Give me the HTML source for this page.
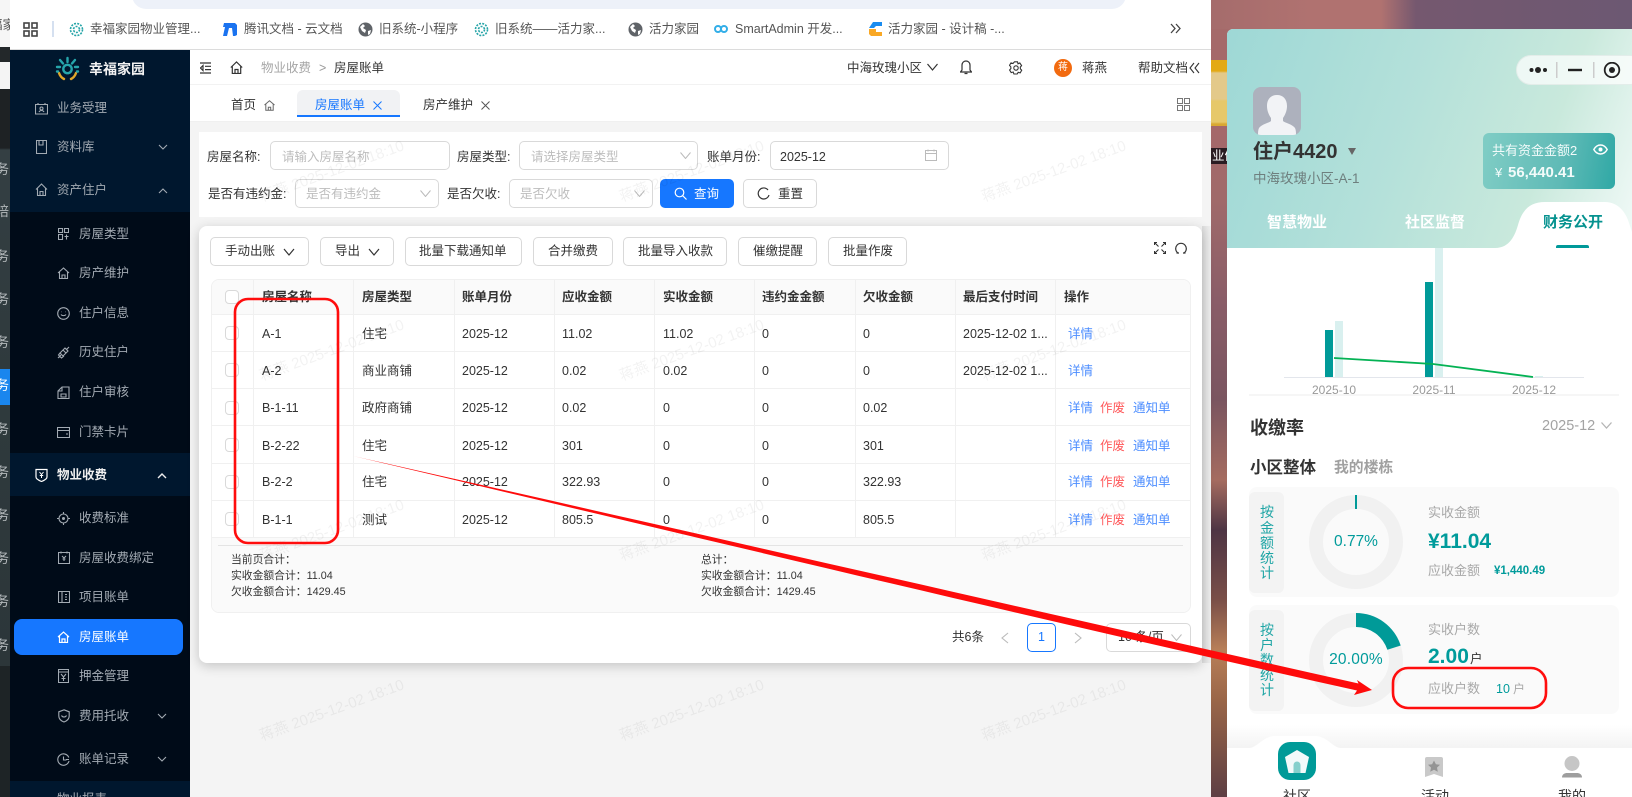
<!DOCTYPE html>
<html lang="zh">
<head>
<meta charset="utf-8">
<title>房屋账单</title>
<style>
html,body{margin:0;padding:0;width:1632px;height:797px;overflow:hidden;background:#fff}
body{position:relative;font-family:"Liberation Sans","Noto Sans CJK SC",sans-serif;font-size:12.5px;color:#333}
div,span,svg{position:absolute;box-sizing:border-box}
.t{white-space:nowrap;line-height:20px;height:20px}
.sb{color:#a3abb3}
.ph{color:#bdbdbd}
.inp{border:1px solid #d9d9d9;border-radius:5px;background:#fff;height:29px}
.btn{border:1px solid #d9d9d9;border-radius:5px;background:#fff;height:29px;top:237px}
.gl{background:#f0f0f0}
.cb{width:14px;height:14px;left:225px;border:1px solid #d9d9d9;border-radius:4px;background:#fff}
.l{color:#4c8dff}.r{color:#ff5a5c}
.b{font-weight:700}
.wm{font-size:15px;color:rgba(0,0,0,.05);white-space:nowrap;transform:translate(-50%,-50%) rotate(-20deg);line-height:20px}
.ic{fill:none;stroke:#a3abb3;stroke-width:1.1}
.bm{color:#555;font-size:12.5px}
.teal{color:#009b9b}
.gr{color:#a8a8a8;font-size:13px}
.vt{left:1249px;width:36px;text-align:center;color:#1fa5a5;font-size:14px;line-height:15px;height:15px}
.card{left:1249px;width:370px;background:#fafafa;border-radius:8px}
.tag{left:1249px;width:35px;background:#f3f3f3;border-radius:6px}
.st{left:-18px;font-size:13.5px;color:#b5babc;letter-spacing:0}
.sm{font-size:10.8px;line-height:16px;height:16px}
</style>
</head>
<body>

<!-- wallpaper -->
<div style="left:1211px;top:0;width:421px;height:797px;background:linear-gradient(180deg,#a56a6a 0,#a5686a 130px,#a06a6a 200px,#8a5d68 300px,#7a5560 400px,#a56c60 480px,#4e3544 530px,#7a4f48 600px,#b87f58 650px,#9a6648 700px,#5e3f44 797px)"></div>
<div style="left:1211px;top:0;width:421px;height:29px;background:linear-gradient(90deg,#a56c6c 0,#b07270 100px,#b07270 170px,#75586f 205px,#6c5872 421px)"></div>
<div style="left:1211px;top:60px;width:16px;height:66px;background:linear-gradient(180deg,#e3a915 0,#e3a915 11px,#e3c98a 13px,#e3c98a 39px,#e6c86a 41px,#e6c86a 62px,#d9a832 64px)"></div>
<div style="left:1211px;top:148px;width:16px;height:16px;background:#2a1c22"></div>
<span class="t" style="left:1212px;top:146px;width:15px;overflow:hidden;color:#fff;font-size:12.5px">业们</span>

<!-- left strip -->
<div style="left:0;top:0;width:10px;height:797px;overflow:hidden;background:linear-gradient(180deg,#f6f6f6 0,#f6f6f6 47px,#23282a 47px,#23282a 62px,#f4f4f4 62px,#f4f4f4 89px,#1e2224 89px,#1e2224 148px,#343f43 150px,#2f3a3d 369px,#1a86ee 369px,#1a86ee 405px,#2f3a3d 405px,#2c3639 666px,#1e2426 666px,#1e2426 797px)">
<span class="t" style="left:-10px;top:15px;color:#555">福家</span>
<span class="t st" style="top:160px">计务</span>
<span class="t st" style="top:202px">计培</span>
<span class="t st" style="top:247px">计务</span>
<span class="t st" style="top:290px">计务</span>
<span class="t st" style="top:333px">计务</span>
<span class="t st" style="top:376px;color:#fff">计务</span>
<span class="t st" style="top:420px">计务</span>
<span class="t st" style="top:463px">计务</span>
<span class="t st" style="top:506px">计务</span>
<span class="t st" style="top:549px">计务</span>
<span class="t st" style="top:592px">计务</span>
<span class="t st" style="top:636px">计务</span>
</div>

<!-- browser chrome -->
<div style="left:10px;top:0;width:1201px;height:50px;background:#fff;border-bottom:1px solid #dcdcdc"></div>
<div style="left:132px;top:-20px;width:994px;height:29px;background:#edf1f9;border-radius:14px"></div>
<svg style="left:23px;top:22px" width="15" height="15" viewBox="0 0 15 15"><g fill="none" stroke="#444" stroke-width="1.6"><rect x="1" y="1" width="5" height="5"/><rect x="9" y="1" width="5" height="5"/><rect x="1" y="9" width="5" height="5"/><rect x="9" y="9" width="5" height="5"/></g></svg>
<div style="left:52px;top:21px;width:2px;height:16px;background:#d5e0f0"></div>
<svg style="left:69px;top:22px" width="15" height="15" viewBox="0 0 15 15"><g fill="none" stroke="#27a5a8" stroke-width="1.6" stroke-dasharray="2 1.2"><circle cx="7.5" cy="7.5" r="6"/><circle cx="7.5" cy="7.5" r="3"/></g></svg>
<span class="t bm" style="left:90px;top:19px">幸福家园物业管理...</span>
<svg style="left:222px;top:22px" width="15" height="15" viewBox="0 0 15 15"><path d="M2 1h11l2 2v10l-2 1h-2l-1-8H7L5 14H1L3 5H1z" fill="#1a73f0"/></svg>
<span class="t bm" style="left:244px;top:19px">腾讯文档 - 云文档</span>
<svg style="left:358px;top:22px" width="15" height="15" viewBox="0 0 15 15"><circle cx="7.5" cy="7.5" r="7" fill="#5f6368"/><path d="M2 5l3-3 2 2-2 2 3 2-1 3-3-2zM10 9l3-1-1 4-2 1z" fill="#fff"/></svg>
<span class="t bm" style="left:379px;top:19px">旧系统-小程序</span>
<svg style="left:474px;top:22px" width="15" height="15" viewBox="0 0 15 15"><g fill="none" stroke="#27a5a8" stroke-width="1.6" stroke-dasharray="2 1.2"><circle cx="7.5" cy="7.5" r="6"/><circle cx="7.5" cy="7.5" r="3"/></g></svg>
<span class="t bm" style="left:495px;top:19px">旧系统——活力家...</span>
<svg style="left:628px;top:22px" width="15" height="15" viewBox="0 0 15 15"><circle cx="7.5" cy="7.5" r="7" fill="#5f6368"/><path d="M2 5l3-3 2 2-2 2 3 2-1 3-3-2zM10 9l3-1-1 4-2 1z" fill="#fff"/></svg>
<span class="t bm" style="left:649px;top:19px">活力家园</span>
<svg style="left:714px;top:23px" width="14" height="12" viewBox="0 0 14 12"><g fill="none" stroke="#32aee8" stroke-width="2"><circle cx="4" cy="6" r="3"/><circle cx="10" cy="6" r="3"/></g></svg>
<span class="t bm" style="left:735px;top:19px">SmartAdmin 开发...</span>
<svg style="left:869px;top:22px" width="13" height="14" viewBox="0 0 13 14"><path d="M4 0h9v4H7L5 6H0z" fill="#1a8cf0"/><path d="M0 7h7v3h6v4H2L0 12z" fill="#f9a825"/></svg>
<span class="t bm" style="left:888px;top:19px">活力家园 - 设计稿 -...</span>
<svg style="left:1170px;top:23px" width="11" height="11" viewBox="0 0 11 11"><path d="M1 1l4 4.5-4 4.5M6 1l4 4.5-4 4.5" fill="none" stroke="#444" stroke-width="1.3"/></svg>

<!-- main bg -->
<div style="left:190px;top:122px;width:1021px;height:675px;background:#f4f4f4;overflow:hidden">
 <div style="left:1012px;top:104px;width:9px;height:437px;background:linear-gradient(90deg,#dcdcdc,#efefef)"></div>
</div>

<!-- sidebar -->
<div style="left:10px;top:50px;width:180px;height:747px;background:#00172e"></div>
<div style="left:10px;top:212px;width:180px;height:241px;background:#000b18"></div>
<div style="left:10px;top:496px;width:180px;height:285px;background:#000b18"></div>
<svg style="left:55px;top:56px" width="25" height="26" viewBox="0 0 25 26"><g fill="none" stroke-width="2.4" stroke-linecap="round"><circle cx="12.5" cy="13" r="4.2" stroke="#26a6ab"/><path d="M12.5 2v4M5 4l3 3.5M20 4l-3 3.5M2 11h3M20 11h3" stroke="#26a6ab"/><path d="M4 17c1 3 3 5 5 6M21 17c-1 3-3 5-5 6" stroke="#e0a72a"/><path d="M2 15.500h1M22 15.500h1" stroke="#26a6ab"/></g></svg>
<span class="t b" style="left:89px;top:59px;color:#f2f2f2;font-size:14px">幸福家园</span>

<svg style="left:35px;top:102px" width="13" height="13" viewBox="0 0 13 13"><path class="ic" d="M.5 2.500h12v9.500H.5zM3 2.500V1M10 2.500V1M5 6.500a1.500 1.500 0 1 0 3 0a1.500 1.500 0 1 0-3 0M4 10c1-2 4-2 5 0"/></svg>
<span class="t sb" style="left:57px;top:98px">业务受理</span>
<svg style="left:36px;top:140px" width="11" height="14" viewBox="0 0 11 14"><path class="ic" d="M.5.500h10v13H.5zM7 .5v4.500H3V.5"/></svg>
<span class="t sb" style="left:57px;top:137px">资料库</span>
<svg style="left:158px;top:144px" width="10" height="6" viewBox="0 0 10 6"><path class="ic" stroke-width="1.4" d="M1 1l4 4 4-4"/></svg>
<svg style="left:35px;top:183px" width="13" height="13" viewBox="0 0 13 13"><path class="ic" d="M1 6.500L6.500 1 12 6.500M2.500 5.500V12.500h8V5.500M5 12.500V8.500h3v4"/></svg>
<span class="t sb" style="left:57px;top:180px">资产住户</span>
<svg style="left:158px;top:188px" width="10" height="6" viewBox="0 0 10 6"><path class="ic" stroke-width="1.4" d="M1 5l4-4 4 4"/></svg>

<svg style="left:58px;top:228px" width="11" height="12" viewBox="0 0 11 12"><path class="ic" d="M.5.500h4v4h-4zM6.500.500h4v4h-4zM.5 6.500h4v5h-4zM6.500 8.500h4M8.500 6.500v5"/></svg>
<span class="t sb" style="left:79px;top:224px">房屋类型</span>
<svg style="left:57px;top:267px" width="13" height="12" viewBox="0 0 13 12"><path class="ic" d="M1 6L6.500 1 12 6M2.500 5v6.500h8V5M5 11.500V8h3v3.500"/></svg>
<span class="t sb" style="left:79px;top:263px">房产维护</span>
<svg style="left:57px;top:307px" width="13" height="13" viewBox="0 0 13 13"><circle class="ic" cx="6.500" cy="6.500" r="5.800"/><path class="ic" d="M4 7.500c1 1.500 4 1.500 5 0M4.300 4.800h.4M8.300 4.800h.4"/></svg>
<span class="t sb" style="left:79px;top:303px">住户信息</span>
<svg style="left:57px;top:346px" width="13" height="13" viewBox="0 0 13 13"><path class="ic" d="M1 12l3-3M12 1L9 4M3 7l3-3 3 3-3 3zM6 4l2-2 3 3-2 2M7 10L4.500 12 1.500 9 3 7"/></svg>
<span class="t sb" style="left:79px;top:342px">历史住户</span>
<svg style="left:57px;top:386px" width="13" height="13" viewBox="0 0 13 13"><path class="ic" d="M1 5L5 1h7v11.500H1zM5 1v4H1M4 8h5v3H4z"/></svg>
<span class="t sb" style="left:79px;top:382px">住户审核</span>
<svg style="left:57px;top:427px" width="13" height="11" viewBox="0 0 13 11"><path class="ic" d="M.5.500h12v10H.5zM.5 3.500h12M9 7h2"/></svg>
<span class="t sb" style="left:79px;top:422px">门禁卡片</span>

<svg style="left:35px;top:468px" width="13" height="14" viewBox="0 0 13 14"><path d="M1 1.500h11V9c0 2-3 3.500-5.500 4.500C4 12.500 1 11 1 9z" fill="none" stroke="#fff" stroke-width="1.2"/><path d="M4.500 4l2 2.500 2-2.500M6.500 6.500V10M4.800 7.500h3.400" fill="none" stroke="#fff" stroke-width="1"/></svg>
<span class="t b" style="left:57px;top:465px;color:#f0f0f0">物业收费</span>
<svg style="left:157px;top:473px" width="10" height="6" viewBox="0 0 10 6"><path d="M1 5l4-4 4 4" fill="none" stroke="#eee" stroke-width="1.4"/></svg>

<svg style="left:57px;top:512px" width="13" height="13" viewBox="0 0 13 13"><circle class="ic" cx="6.500" cy="6.500" r="4.500"/><circle cx="6.500" cy="6.500" r="1.500" fill="#a3abb3"/><path class="ic" d="M6.500 0v2M6.500 11v2M0 6.500h2M11 6.500h2"/></svg>
<span class="t sb" style="left:79px;top:508px">收费标准</span>
<svg style="left:58px;top:551px" width="12" height="13" viewBox="0 0 12 13"><path class="ic" d="M.5 1.500h11v11H.5zM3 .5v2M9 .5v2M4 5l2 2 2-2M6 7v3M4.500 8h3"/></svg>
<span class="t sb" style="left:79px;top:548px">房屋收费绑定</span>
<svg style="left:58px;top:591px" width="12" height="12" viewBox="0 0 12 12"><path class="ic" d="M.5.500h11v11H.5zM7 3.500h2M7 6h2M7 8.500h2M4 .5v11"/></svg>
<span class="t sb" style="left:79px;top:587px">项目账单</span>

<div style="left:14px;top:619px;width:169px;height:36px;background:#1677ff;border-radius:8px"></div>
<svg style="left:57px;top:631px" width="13" height="12" viewBox="0 0 13 12"><path d="M1 6L6.500 1 12 6M2.500 5v6.500h8V5M5 11.500V8h3v3.500" fill="none" stroke="#fff" stroke-width="1.2"/></svg>
<span class="t" style="left:79px;top:627px;color:#fff">房屋账单</span>

<svg style="left:58px;top:669px" width="11" height="14" viewBox="0 0 11 14"><path class="ic" d="M.5.500h10v13H.5zM.5 3h10M3 5l2.500 3L8 5M5.500 8v4M3.500 9.500h4"/></svg>
<span class="t sb" style="left:79px;top:666px">押金管理</span>
<svg style="left:58px;top:709px" width="12" height="14" viewBox="0 0 12 14"><path class="ic" d="M6 .8l5.200 2V7c0 3-2.500 5-5.200 6C3.300 12 .8 10 .8 7V2.800zM3.500 6.500c1 2 4 2 5 0"/></svg>
<span class="t sb" style="left:79px;top:706px">费用托收</span>
<svg style="left:157px;top:713px" width="10" height="6" viewBox="0 0 10 6"><path class="ic" stroke-width="1.4" d="M1 1l4 4 4-4"/></svg>
<svg style="left:57px;top:753px" width="13" height="13" viewBox="0 0 13 13"><path class="ic" d="M11.800 4.500A5.700 5.700 0 1 0 12 8M6.500 3.500v3.500h3M9 6.500h3"/></svg>
<span class="t sb" style="left:79px;top:749px">账单记录</span>
<svg style="left:157px;top:756px" width="10" height="6" viewBox="0 0 10 6"><path class="ic" stroke-width="1.4" d="M1 1l4 4 4-4"/></svg>
<span class="t sb" style="left:57px;top:789px;height:8px;overflow:hidden;line-height:20px">物业报表</span>

<!-- top header -->
<div style="left:190px;top:50px;width:1021px;height:35px;background:#fff;border-bottom:1px solid #f2f2f2"></div>
<svg style="left:200px;top:62px" width="11" height="12" viewBox="0 0 11 12"><path d="M0 1h11M5 4.300h6M5 7.600h6M0 11h11M3 3.500L.5 6 3 8.500z" fill="none" stroke="#333" stroke-width="1.2"/></svg>
<svg style="left:230px;top:61px" width="13" height="13" viewBox="0 0 13 13"><path d="M.8 6.500L6.500 1l5.700 5.500M2.300 5.500v7h8.400v-7M5 12.500V8.500h3v4" fill="none" stroke="#333" stroke-width="1.2"/></svg>
<span class="t" style="left:261px;top:58px;color:#a6a6a6">物业收费</span>
<span class="t" style="left:319px;top:58px;color:#999">&gt;</span>
<span class="t" style="left:334px;top:58px;color:#333">房屋账单</span>
<span class="t" style="left:847px;top:58px;color:#333">中海玫瑰小区</span>
<svg style="left:927px;top:63px" width="11" height="8" viewBox="0 0 11 8"><path d="M.5 1l5 6 5-6" fill="none" stroke="#333" stroke-width="1.2"/></svg>
<svg style="left:960px;top:60px" width="12" height="15" viewBox="0 0 12 15"><path d="M6 1c-2.500 0-4 2-4 4v5l-1.500 2h11L10 10V5c0-2-1.500-4-4-4zM4.500 13.500h3" fill="none" stroke="#333" stroke-width="1.2"/></svg>
<svg style="left:1009px;top:61px" width="14" height="14" viewBox="0 0 14 14"><path d="M5.500.8h3l.5 2 1.800-.8 1.800 2.600-1.300 1.500.1 1.800 1.300 1.300-1.500 2.700-2-.6-1 1.700-3.300 0-.7-2-2 .6L.6 9l1.300-1.500L1.800 5.800.5 4.400 2 1.900l2 .6z" fill="none" stroke="#333" stroke-width="1.1"/><circle cx="7" cy="7" r="2.200" fill="none" stroke="#333" stroke-width="1.1"/></svg>
<div style="left:1054px;top:59px;width:18px;height:18px;border-radius:50%;background:#f26a0f"></div>
<span class="t" style="left:1058px;top:58px;color:#fff;font-size:10px">蒋</span>
<span class="t" style="left:1082px;top:58px">蒋燕</span>
<span class="t" style="left:1138px;top:58px">帮助文档</span>
<svg style="left:1189px;top:62px" width="11" height="12" viewBox="0 0 11 12"><path d="M5 1L1 6l4 5M10 1L6 6l4 5" fill="none" stroke="#333" stroke-width="1.1"/></svg>

<!-- tabs -->
<div style="left:190px;top:85px;width:1021px;height:37px;background:#fff;border-bottom:1px solid #f0f0f0"></div>
<span class="t" style="left:231px;top:95px">首页</span>
<svg style="left:264px;top:100px" width="11" height="11" viewBox="0 0 11 11"><path d="M.5 5L5.500.8 10.500 5M1.800 4.300v6h7.400v-6M4.300 10.300V7.300h2.400v3" fill="none" stroke="#666" stroke-width="1"/></svg>
<div style="left:297px;top:90px;width:103px;height:27px;background:#f1f2f4;border-radius:6px 6px 0 0;border-bottom:2px solid #1677ff"></div>
<span class="t" style="left:315px;top:95px;color:#1677ff">房屋账单</span>
<svg style="left:373px;top:101px" width="9" height="9" viewBox="0 0 9 9"><path d="M.5.500l8 8M8.500.5l-8 8" stroke="#1677ff" stroke-width="1"/></svg>
<span class="t" style="left:423px;top:95px">房产维护</span>
<svg style="left:481px;top:101px" width="9" height="9" viewBox="0 0 9 9"><path d="M.5.500l8 8M8.500.5l-8 8" stroke="#555" stroke-width="1"/></svg>
<svg style="left:1177px;top:98px" width="13" height="13" viewBox="0 0 13 13"><g fill="none" stroke="#777" stroke-width="1"><rect x=".5" y=".5" width="5" height="5"/><rect x="7.500" y=".5" width="5" height="5"/><rect x=".5" y="7.500" width="5" height="5"/><rect x="7.500" y="7.500" width="5" height="5"/></g></svg>

<!-- search panel -->
<div style="left:199px;top:132px;width:1003px;height:85px;background:#fff"></div>
<span class="t" style="left:207px;top:147px">房屋名称:</span>
<div class="inp" style="left:270px;top:141px;width:180px"></div>
<span class="t ph" style="left:282px;top:147px">请输入房屋名称</span>
<span class="t" style="left:457px;top:147px">房屋类型:</span>
<div class="inp" style="left:519px;top:141px;width:179px"></div>
<span class="t ph" style="left:531px;top:147px">请选择房屋类型</span>
<svg style="left:680px;top:152px" width="11" height="7" viewBox="0 0 11 7"><path d="M.5.500l5 6 5-6" fill="none" stroke="#bbb" stroke-width="1"/></svg>
<span class="t" style="left:707px;top:147px">账单月份:</span>
<div class="inp" style="left:770px;top:141px;width:179px"></div>
<span class="t" style="left:780px;top:147px">2025-12</span>
<svg style="left:925px;top:149px" width="12" height="12" viewBox="0 0 12 12"><path d="M.5 1.500h11v10H.5zM.5 4.500h11M3 .5v2M9 .5v2" fill="none" stroke="#bbb" stroke-width="1"/></svg>

<span class="t" style="left:208px;top:184px">是否有违约金:</span>
<div class="inp" style="left:295px;top:179px;width:144px"></div>
<span class="t ph" style="left:306px;top:184px">是否有违约金</span>
<svg style="left:420px;top:190px" width="11" height="7" viewBox="0 0 11 7"><path d="M.5.500l5 6 5-6" fill="none" stroke="#bbb" stroke-width="1"/></svg>
<span class="t" style="left:447px;top:184px">是否欠收:</span>
<div class="inp" style="left:509px;top:179px;width:144px"></div>
<span class="t ph" style="left:520px;top:184px">是否欠收</span>
<svg style="left:634px;top:190px" width="11" height="7" viewBox="0 0 11 7"><path d="M.5.500l5 6 5-6" fill="none" stroke="#bbb" stroke-width="1"/></svg>
<div style="left:660px;top:179px;width:74px;height:29px;background:#1677ff;border-radius:5px"></div>
<svg style="left:674px;top:187px" width="13" height="13" viewBox="0 0 13 13"><circle cx="5.500" cy="5.500" r="4.300" fill="none" stroke="#fff" stroke-width="1.2"/><path d="M8.500 8.500l4 4" stroke="#fff" stroke-width="1.2"/></svg>
<span class="t" style="left:694px;top:184px;color:#fff">查询</span>
<div class="inp" style="left:743px;top:179px;width:74px"></div>
<svg style="left:757px;top:187px" width="13" height="13" viewBox="0 0 13 13"><path d="M11 3a5.500 5.500 0 1 0 1 5" fill="none" stroke="#333" stroke-width="1.2"/></svg>
<span class="t" style="left:778px;top:184px">重置</span>

<!-- table card -->
<div style="left:199px;top:226px;width:1003px;height:437px;background:#fff;border-radius:8px;box-shadow:0 3px 12px rgba(0,0,0,.2)"></div>
<div class="btn" style="left:210px;width:99px"></div><span class="t" style="left:225px;top:241px">手动出账</span>
<svg style="left:283px;top:248px" width="12" height="8" viewBox="0 0 12 8"><path d="M1 1l5 6 5-6" fill="none" stroke="#333" stroke-width="1.2"/></svg>
<div class="btn" style="left:320px;width:74px"></div><span class="t" style="left:335px;top:241px">导出</span>
<svg style="left:368px;top:248px" width="12" height="8" viewBox="0 0 12 8"><path d="M1 1l5 6 5-6" fill="none" stroke="#333" stroke-width="1.2"/></svg>
<div class="btn" style="left:405px;width:117px"></div><span class="t" style="left:419px;top:241px">批量下载通知单</span>
<div class="btn" style="left:533px;width:80px"></div><span class="t" style="left:548px;top:241px">合并缴费</span>
<div class="btn" style="left:623px;width:104px"></div><span class="t" style="left:638px;top:241px">批量导入收款</span>
<div class="btn" style="left:738px;width:79px"></div><span class="t" style="left:753px;top:241px">催缴提醒</span>
<div class="btn" style="left:828px;width:79px"></div><span class="t" style="left:843px;top:241px">批量作废</span>
<svg style="left:1154px;top:242px" width="12" height="12" viewBox="0 0 12 12"><path d="M1 1l3.500 3.500M11 1L7.500 4.500M1 11l3.500-3.500M11 11L7.500 7.500M.5 3V.5H3M9 .5h2.500V3M.5 9v2.500H3M9 11.500h2.500V9" fill="none" stroke="#333" stroke-width="1.1"/></svg>
<svg style="left:1175px;top:242px" width="12" height="12" viewBox="0 0 12 12"><path d="M3 11A5.300 5.300 0 1 1 9 11M1.500 11H4M8 11h2.500" fill="none" stroke="#333" stroke-width="1.2"/></svg>

<!-- table -->
<div style="left:211px;top:279px;width:980px;height:334px;border:1px solid #f0f0f0;border-radius:8px;background:#fff"></div>
<div style="left:212px;top:280px;width:978px;height:34px;background:#fafafa;border-radius:7px 7px 0 0"></div>
<div style="left:212px;top:537px;width:978px;height:75px;background:#fafafa;border-radius:0 0 7px 7px"></div>

<div class="gl" style="left:211px;top:314px;width:980px;height:1px"></div>
<div class="gl" style="left:211px;top:351px;width:980px;height:1px"></div>
<div class="gl" style="left:211px;top:388px;width:980px;height:1px"></div>
<div class="gl" style="left:211px;top:425px;width:980px;height:1px"></div>
<div class="gl" style="left:211px;top:463px;width:980px;height:1px"></div>
<div class="gl" style="left:211px;top:500px;width:980px;height:1px"></div>
<div class="gl" style="left:211px;top:537px;width:980px;height:1px"></div>

<div class="gl" style="left:253px;top:280px;width:1px;height:257px"></div>
<div class="gl" style="left:353px;top:280px;width:1px;height:257px"></div>
<div class="gl" style="left:454px;top:280px;width:1px;height:257px"></div>
<div class="gl" style="left:554px;top:280px;width:1px;height:257px"></div>
<div class="gl" style="left:654px;top:280px;width:1px;height:257px"></div>
<div class="gl" style="left:754px;top:280px;width:1px;height:257px"></div>
<div class="gl" style="left:855px;top:280px;width:1px;height:257px"></div>
<div class="gl" style="left:955px;top:280px;width:1px;height:257px"></div>
<div class="gl" style="left:1055px;top:280px;width:1px;height:257px"></div>

<div class="cb" style="top:290px"></div>
<div class="cb" style="top:326px"></div>
<div class="cb" style="top:363px"></div>
<div class="cb" style="top:401px"></div>
<div class="cb" style="top:438px"></div>
<div class="cb" style="top:475px"></div>
<div class="cb" style="top:512px"></div>

<span class="t b" style="left:262px;top:287px">房屋名称</span>
<span class="t b" style="left:362px;top:287px">房屋类型</span>
<span class="t b" style="left:462px;top:287px">账单月份</span>
<span class="t b" style="left:562px;top:287px">应收金额</span>
<span class="t b" style="left:663px;top:287px">实收金额</span>
<span class="t b" style="left:762px;top:287px">违约金金额</span>
<span class="t b" style="left:863px;top:287px">欠收金额</span>
<span class="t b" style="left:963px;top:287px">最后支付时间</span>
<span class="t b" style="left:1064px;top:287px">操作</span>

<span class="t" style="left:262px;top:324px">A-1</span><span class="t" style="left:362px;top:324px">住宅</span><span class="t" style="left:462px;top:324px">2025-12</span><span class="t" style="left:562px;top:324px">11.02</span><span class="t" style="left:663px;top:324px">11.02</span><span class="t" style="left:762px;top:324px">0</span><span class="t" style="left:863px;top:324px">0</span><span class="t" style="left:963px;top:324px">2025-12-02 1...</span><span class="t l" style="left:1068px;top:324px">详情</span>

<span class="t" style="left:262px;top:361px">A-2</span><span class="t" style="left:362px;top:361px">商业商铺</span><span class="t" style="left:462px;top:361px">2025-12</span><span class="t" style="left:562px;top:361px">0.02</span><span class="t" style="left:663px;top:361px">0.02</span><span class="t" style="left:762px;top:361px">0</span><span class="t" style="left:863px;top:361px">0</span><span class="t" style="left:963px;top:361px">2025-12-02 1...</span><span class="t l" style="left:1068px;top:361px">详情</span>

<span class="t" style="left:262px;top:398px">B-1-11</span><span class="t" style="left:362px;top:398px">政府商铺</span><span class="t" style="left:462px;top:398px">2025-12</span><span class="t" style="left:562px;top:398px">0.02</span><span class="t" style="left:663px;top:398px">0</span><span class="t" style="left:762px;top:398px">0</span><span class="t" style="left:863px;top:398px">0.02</span><span class="t l" style="left:1068px;top:398px">详情</span><span class="t r" style="left:1100px;top:398px">作废</span><span class="t l" style="left:1133px;top:398px">通知单</span>

<span class="t" style="left:262px;top:436px">B-2-22</span><span class="t" style="left:362px;top:436px">住宅</span><span class="t" style="left:462px;top:436px">2025-12</span><span class="t" style="left:562px;top:436px">301</span><span class="t" style="left:663px;top:436px">0</span><span class="t" style="left:762px;top:436px">0</span><span class="t" style="left:863px;top:436px">301</span><span class="t l" style="left:1068px;top:436px">详情</span><span class="t r" style="left:1100px;top:436px">作废</span><span class="t l" style="left:1133px;top:436px">通知单</span>

<span class="t" style="left:262px;top:472px">B-2-2</span><span class="t" style="left:362px;top:472px">住宅</span><span class="t" style="left:462px;top:472px">2025-12</span><span class="t" style="left:562px;top:472px">322.93</span><span class="t" style="left:663px;top:472px">0</span><span class="t" style="left:762px;top:472px">0</span><span class="t" style="left:863px;top:472px">322.93</span><span class="t l" style="left:1068px;top:472px">详情</span><span class="t r" style="left:1100px;top:472px">作废</span><span class="t l" style="left:1133px;top:472px">通知单</span>

<span class="t" style="left:262px;top:510px">B-1-1</span><span class="t" style="left:362px;top:510px">测试</span><span class="t" style="left:462px;top:510px">2025-12</span><span class="t" style="left:562px;top:510px">805.5</span><span class="t" style="left:663px;top:510px">0</span><span class="t" style="left:762px;top:510px">0</span><span class="t" style="left:863px;top:510px">805.5</span><span class="t l" style="left:1068px;top:510px">详情</span><span class="t r" style="left:1100px;top:510px">作废</span><span class="t l" style="left:1133px;top:510px">通知单</span>

<div style="left:218px;top:545px;width:965px;height:1px;background:#e4e4e4"></div>
<span class="t sm" style="left:231px;top:552px">当前页合计：</span>
<span class="t sm" style="left:231px;top:568px">实收金额合计：11.04</span>
<span class="t sm" style="left:231px;top:584px">欠收金额合计：1429.45</span>
<span class="t sm" style="left:701px;top:552px">总计：</span>
<span class="t sm" style="left:701px;top:568px">实收金额合计：11.04</span>
<span class="t sm" style="left:701px;top:584px">欠收金额合计：1429.45</span>

<!-- pagination -->
<span class="t" style="left:952px;top:627px">共6条</span>
<svg style="left:1001px;top:632px" width="8" height="12" viewBox="0 0 8 12"><path d="M7 1L1 6l6 5" fill="none" stroke="#bbb" stroke-width="1.1"/></svg>
<div style="left:1027px;top:623px;width:29px;height:29px;border:1px solid #1677ff;border-radius:5px;background:#fff"></div>
<span class="t" style="left:1038px;top:627px;color:#1677ff">1</span>
<svg style="left:1074px;top:632px" width="8" height="12" viewBox="0 0 8 12"><path d="M1 1l6 5-6 5" fill="none" stroke="#bbb" stroke-width="1.1"/></svg>
<div class="inp" style="left:1106px;top:623px;width:85px"></div>
<span class="t" style="left:1118px;top:627px">10 条/页</span>
<svg style="left:1171px;top:634px" width="11" height="7" viewBox="0 0 11 7"><path d="M.5.500l5 6 5-6" fill="none" stroke="#bbb" stroke-width="1"/></svg>

<!-- watermarks -->
<div style="left:190px;top:122px;width:1021px;height:675px;overflow:hidden">
<span class="wm" style="left:142px;top:50px">蒋燕 2025-12-02 18:10</span>
<span class="wm" style="left:502px;top:50px">蒋燕 2025-12-02 18:10</span>
<span class="wm" style="left:864px;top:50px">蒋燕 2025-12-02 18:10</span>
<span class="wm" style="left:142px;top:229px">蒋燕 2025-12-02 18:10</span>
<span class="wm" style="left:502px;top:229px">蒋燕 2025-12-02 18:10</span>
<span class="wm" style="left:864px;top:229px">蒋燕 2025-12-02 18:10</span>
<span class="wm" style="left:142px;top:409px">蒋燕 2025-12-02 18:10</span>
<span class="wm" style="left:502px;top:409px">蒋燕 2025-12-02 18:10</span>
<span class="wm" style="left:864px;top:409px">蒋燕 2025-12-02 18:10</span>
<span class="wm" style="left:142px;top:589px">蒋燕 2025-12-02 18:10</span>
<span class="wm" style="left:502px;top:589px">蒋燕 2025-12-02 18:10</span>
<span class="wm" style="left:864px;top:589px">蒋燕 2025-12-02 18:10</span>
</div>

<!-- phone panel -->
<div style="left:1227px;top:29px;width:405px;height:768px;background:#fff;border-radius:6px 0 0 0"></div>
<div style="left:1227px;top:29px;width:405px;height:219px;border-radius:6px 0 0 0;background:linear-gradient(110deg,#9ed8d6 0%,#b5e1da 45%,#c9e9dc 75%,#f2faf8 100%)"></div>

<div style="left:1516px;top:55px;width:130px;height:30px;border-radius:15px;background:rgba(255,255,255,.72);border:1px solid rgba(225,235,232,.9)"></div>
<svg style="left:1528px;top:62px" width="100" height="16" viewBox="0 0 100 16"><circle cx="3.500" cy="8" r="2" fill="#222"/><circle cx="10" cy="8" r="3" fill="#222"/><circle cx="17" cy="8" r="2" fill="#222"/><rect x="28" y="0" width="1.500" height="16" fill="#ccc"/><rect x="40" y="6.800" width="14" height="2.400" fill="#222"/><rect x="65" y="0" width="1.500" height="16" fill="#ccc"/><circle cx="84" cy="8" r="7.300" fill="none" stroke="#222" stroke-width="1.800"/><circle cx="84" cy="8" r="3" fill="#222"/></svg>

<div style="left:1253px;top:87px;width:48px;height:48px;border-radius:8px;background:#adb1bd;overflow:hidden">
<svg style="left:0;top:0" width="48" height="48" viewBox="0 0 48 48"><path d="M24 8c6 0 10 4 10 11 0 5-2 9-4 12v3c2 2 9 3 12 7 1 2 1 5 1 7H5c0-2 0-5 1-7 3-4 10-5 12-7v-3c-2-3-4-7-4-12 0-7 4-11 10-11z" fill="#f2f3f6"/></svg>
</div>
<span class="t b" style="left:1253px;top:140px;font-size:20px;line-height:24px;height:24px;color:#333">住户4420</span>
<svg style="left:1348px;top:148px" width="8" height="7" viewBox="0 0 8 7"><path d="M0 0h8L4 7z" fill="#666"/></svg>
<span class="t" style="left:1253px;top:169px;font-size:13.500px;color:#6e7f7e">中海玫瑰小区-A-1</span>

<div style="left:1483px;top:133px;width:132px;height:56px;border-radius:6px;background:linear-gradient(100deg,#80cdc5 0%,#5fbab6 60%,#2fa8a5 100%)"></div>
<span class="t" style="left:1492px;top:141px;color:#f3fbfa;font-size:13px">共有资金金额2</span>
<svg style="left:1593px;top:144px" width="15" height="11" viewBox="0 0 15 11"><path d="M.8 5.500C2.500 2.500 5 1 7.500 1s5 1.500 6.700 4.500C12.500 8.500 10 10 7.500 10S2.500 8.500.8 5.500z" fill="none" stroke="#fff" stroke-width="1.400"/><circle cx="7.500" cy="5.500" r="2" fill="#fff"/></svg>
<span class="t" style="left:1495px;top:163px;color:#f3fbfa;font-size:13px">¥</span>
<span class="t b" style="left:1508px;top:163px;color:#f3fbfa;font-size:15px">56,440.41</span>

<svg style="left:1495px;top:202px" width="137" height="46" viewBox="0 0 137 46"><path d="M0 46C15 46 20 33 23 23C27 8 35 0 50 0H110C123 0 130 10 133 18L137 30V46Z" fill="#fff"/></svg>
<span class="t b" style="left:1267px;top:213px;color:#fff;font-size:15px">智慧物业</span>
<span class="t b" style="left:1405px;top:213px;color:#fff;font-size:15px">社区监督</span>
<span class="t b" style="left:1543px;top:213px;color:#05928f;font-size:15px">财务公开</span>
<div style="left:1556px;top:245px;width:33px;height:3px;background:#009999;border-radius:2px 2px 0 0"></div>

<!-- chart -->
<div style="left:1284px;top:377px;width:300px;height:1px;background:#e3e6ec"></div>
<div style="left:1325px;top:330px;width:8px;height:47px;background:#009a98"></div>
<div style="left:1335px;top:321px;width:8px;height:56px;background:#d9f0ef"></div>
<div style="left:1425px;top:282px;width:8px;height:95px;background:#009a98"></div>
<div style="left:1435px;top:248px;width:8px;height:129px;background:#d9f0ef"></div>
<div style="left:1535px;top:376px;width:8px;height:1px;background:#d9f0ef"></div>
<svg style="left:1320px;top:350px" width="230" height="30" viewBox="0 0 230 30"><path d="M14 8L113 14 213 27" fill="none" stroke="#04b254" stroke-width="1.800"/></svg>
<span class="t" style="left:1312px;top:380px;width:44px;text-align:center;font-size:12px;color:#999">2025-10</span>
<span class="t" style="left:1412px;top:380px;width:44px;text-align:center;font-size:12px;color:#999">2025-11</span>
<span class="t" style="left:1512px;top:380px;width:44px;text-align:center;font-size:12px;color:#999">2025-12</span>
<div style="left:1249px;top:394px;width:370px;height:2px;background:#f6f6f6"></div>

<span class="t b" style="left:1250px;top:416px;font-size:18px;line-height:24px;height:24px;color:#333">收缴率</span>
<span class="t" style="left:1542px;top:416px;font-size:14.500px;color:#a3a3a3">2025-12</span>
<svg style="left:1601px;top:422px" width="11" height="7" viewBox="0 0 11 7"><path d="M.5.500l5 5.500 5-5.500" fill="none" stroke="#b5b5b5" stroke-width="1.300"/></svg>
<span class="t b" style="left:1250px;top:458px;font-size:16.500px;color:#333">小区整体</span>
<span class="t b" style="left:1334px;top:458px;font-size:14.800px;color:#a0a0a0">我的楼栋</span>

<!-- card 1 -->
<div class="card" style="top:487px;height:110px"></div>
<div class="tag" style="top:492px;height:101px"></div>
<span class="vt" style="top:505px">按</span><span class="vt" style="top:521px">金</span><span class="vt" style="top:536px">额</span><span class="vt" style="top:551px">统</span><span class="vt" style="top:566px">计</span>
<svg style="left:1309px;top:495px" width="94" height="94" viewBox="0 0 94 94"><circle cx="47" cy="47" r="40" fill="none" stroke="#f1f1f1" stroke-width="14"/><rect x="46" y="0" width="2" height="14" fill="#009a98"/></svg>
<span class="t teal" style="left:1309px;top:532px;width:94px;text-align:center;font-size:15.500px">0.77%</span>
<span class="t gr" style="left:1428px;top:503px">实收金额</span>
<span class="t b teal" style="left:1428px;top:531px;font-size:21px;line-height:22px;height:22px">¥11.04</span>
<span class="t gr" style="left:1428px;top:561px">应收金额</span>
<span class="t b teal" style="left:1494px;top:561px;font-size:11.500px">¥1,440.49</span>

<!-- card 2 -->
<div class="card" style="top:605px;height:109px"></div>
<div class="tag" style="top:610px;height:101px"></div>
<span class="vt" style="top:623px">按</span><span class="vt" style="top:638px">户</span><span class="vt" style="top:653px">数</span><span class="vt" style="top:668px">统</span><span class="vt" style="top:683px">计</span>
<svg style="left:1309px;top:613px" width="94" height="94" viewBox="0 0 94 94"><circle cx="47" cy="47" r="40" fill="none" stroke="#f1f1f1" stroke-width="14"/><path d="M47 0A47 47 0 0 1 91.700 32.500L78.400 36.800A33 33 0 0 0 47 14Z" fill="#009a98"/></svg>
<span class="t teal" style="left:1309px;top:650px;width:94px;text-align:center;font-size:15.500px;letter-spacing:.2px">20.00%</span>
<span class="t gr" style="left:1428px;top:620px">实收户数</span>
<span class="t b teal" style="left:1428px;top:646px;font-size:21px;line-height:22px;height:22px">2.00</span>
<span class="t" style="left:1470px;top:649px;font-size:12.500px;color:#333">户</span>
<span class="t gr" style="left:1428px;top:679px">应收户数</span>
<span class="t teal" style="left:1496px;top:679px;font-size:12.500px">10</span>
<span class="t gr" style="left:1513px;top:679px;font-size:12px">户</span>

<!-- bottom nav -->
<div style="left:1227px;top:725px;width:405px;height:23px;background:linear-gradient(180deg,rgba(240,240,240,0),rgba(236,236,236,.6))"></div>
<svg style="left:1227px;top:734px" width="405" height="63" viewBox="0 0 405 63"><path d="M0 14H22C30 14 36 2 48 2H88C100 2 106 14 114 14H405V63H0Z" fill="#fff"/></svg>
<div style="left:1278px;top:742px;width:38px;height:38px;background:#009a98;border-radius:12px"></div>
<svg style="left:1284px;top:749px" width="26" height="25" viewBox="0 0 26 25"><path d="M13 1L25 8 21.500 24H4.500L1 8Z" fill="#f2fafa"/><path d="M9.500 24V16a3.500 3.500 0 0 1 7 0V24Z" fill="#85d0cc"/></svg>
<span class="t" style="left:1283px;top:786px;font-size:14px;color:#333">社区</span>
<svg style="left:1425px;top:757px" width="18" height="20" viewBox="0 0 18 20"><path d="M0 2Q0 0 2 0H16Q18 0 18 2V20L9 17 0 20Z" fill="#c9c9c9"/><path d="M9 3.500L10.900 7.300 15 7.800 12 10.600 12.800 14.700 9 12.700 5.200 14.700 6 10.600 3 7.800 7.100 7.300Z" fill="#949494"/></svg>
<span class="t" style="left:1421px;top:786px;font-size:14px;color:#333">活动</span>
<svg style="left:1562px;top:756px" width="20" height="22" viewBox="0 0 20 22"><circle cx="10" cy="7.500" r="7.500" fill="#c6c6c6"/><path d="M0 21.500C0 18 3 17 5 17H15C17 17 20 18 20 21.500Z" fill="#9e9e9e"/></svg>
<span class="t" style="left:1558px;top:786px;font-size:14px;color:#333">我的</span>

<!-- red annotations -->
<svg style="left:0;top:0" width="1632" height="797" viewBox="0 0 1632 797">
<rect x="235" y="299" width="103" height="244" rx="13" fill="none" stroke="#ff0d0d" stroke-width="2.600"/>
<rect x="1393" y="668" width="153" height="40" rx="15" fill="none" stroke="#ff0d0d" stroke-width="2.600"/>
<path d="M353 456C700 534 1040 612 1358.500 683.500L1357 680 1372 690 1354 695 1357 690.500C1040 620 700 538 353 456Z" fill="#fe0b0b"/>
</svg>

</body>
</html>
